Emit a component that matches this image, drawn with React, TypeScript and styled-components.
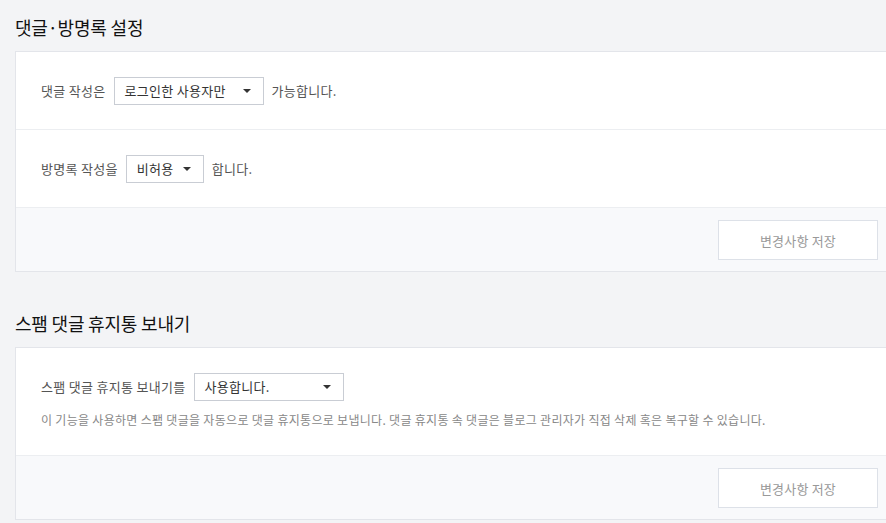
import styled, { createGlobalStyle } from "styled-components";

const GlobalStyle = createGlobalStyle`
  html, body {
    margin: 0;
    padding: 0;
    background: #f3f4f6;
    overflow: hidden;
  }
  body {
    font-family: "Noto Sans CJK KR", "Noto Sans", sans-serif;
    color: #333;
  }
`;

const Page = styled.div`
  padding: 15px 0 0 15px;
  width: 880px;
`;

const Section = styled.section`
  & + & {
    margin-top: 39px;
  }
`;

const Title = styled.h2`
  margin: 0 0 12px;
  font-size: 18px;
  line-height: 24px;
  font-weight: 400;
  color: #111;
  letter-spacing: -0.2px;
`;

const Panel = styled.div`
  background: #fff;
  border: 1px solid #e3e5ea;
  border-right: none;
`;

const Row = styled.div<{ $padBottom?: number }>`
  padding: 25px 25px ${(p) => p.$padBottom ?? 24}px;
  border-bottom: 1px solid #eceef1;
`;

const Line = styled.div`
  display: flex;
  align-items: center;
  gap: 8px;
  height: 28px;
  font-size: 13px;
  line-height: 28px;
  color: #555;
  letter-spacing: 0.3px;
`;

const Select = styled.div<{ $width: number }>`
  box-sizing: border-box;
  width: ${(p) => p.$width}px;
  height: 28px;
  border: 1px solid #c9cdd4;
  background: #fff;
  display: flex;
  align-items: center;
  justify-content: space-between;
  padding: 0 12px 0 10px;
  font-size: 13px;
  color: #333;
`;

const Arrow = styled.span`
  width: 0;
  height: 0;
  border-left: 4px solid transparent;
  border-right: 4px solid transparent;
  border-top: 4px solid #333;
`;

const Desc = styled.p`
  margin: 10px 0 0;
  font-size: 12px;
  line-height: 18px;
  color: #888;
  letter-spacing: 0.3px;
`;

const Footer = styled.div`
  background: #f8f9fb;
  padding: 12px 17px 11px 0;
  display: flex;
  justify-content: flex-end;
`;

const SaveButton = styled.button`
  box-sizing: border-box;
  width: 160px;
  height: 40px;
  background: #fff;
  border: 1px solid #dde1e8;
  color: #999;
  font-family: inherit;
  font-size: 13px;
  letter-spacing: 0.2px;
  cursor: pointer;
`;

function Dropdown({ value, width }: { value: string; width: number }) {
  return (
    <Select $width={width}>
      <span>{value}</span>
      <Arrow />
    </Select>
  );
}

export default function App() {
  return (
    <>
      <GlobalStyle />
      <Page>
        <Section>
          <Title>댓글·방명록 설정</Title>
          <Panel>
            <Row>
              <Line>
                <span>댓글 작성은</span>
                <Dropdown value="로그인한 사용자만" width={150} />
                <span>가능합니다.</span>
              </Line>
            </Row>
            <Row>
              <Line>
                <span>방명록 작성을</span>
                <Dropdown value="비허용" width={78} />
                <span>합니다.</span>
              </Line>
            </Row>
            <Footer>
              <SaveButton>변경사항 저장</SaveButton>
            </Footer>
          </Panel>
        </Section>
        <Section>
          <Title>스팸 댓글 휴지통 보내기</Title>
          <Panel>
            <Row $padBottom={26}>
              <Line>
                <span>스팸 댓글 휴지통 보내기를</span>
                <Dropdown value="사용합니다." width={150} />
              </Line>
              <Desc>
                이 기능을 사용하면 스팸 댓글을 자동으로 댓글 휴지통으로 보냅니다. 댓글 휴지통 속 댓글은 블로그 관리자가 직접 삭제 혹은 복구할 수 있습니다.
              </Desc>
            </Row>
            <Footer>
              <SaveButton>변경사항 저장</SaveButton>
            </Footer>
          </Panel>
        </Section>
      </Page>
    </>
  );
}
